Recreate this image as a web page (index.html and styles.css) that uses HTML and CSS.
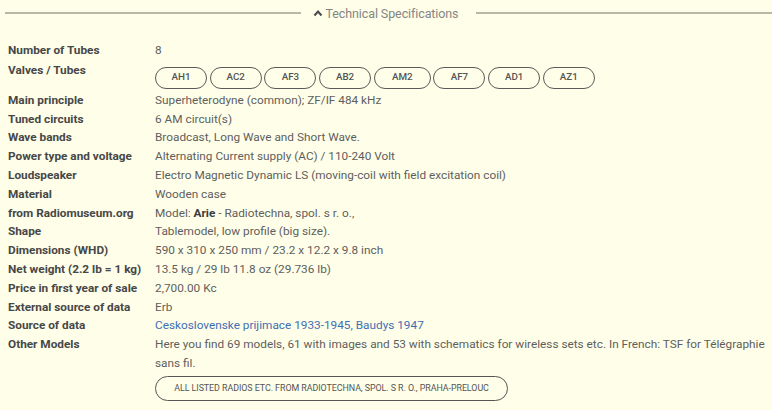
FILE: index.html
```html
<!DOCTYPE html>
<html>
<head>
<meta charset="utf-8">
<link rel="stylesheet" href="styles.css">
</head>
<body>
<div class="heading">
  <span class="rule"></span>
  <span class="title"><svg class="caret" width="10" height="8" viewBox="0 0 10 8"><path d="M1.5 6.5 L5 2.5 L8.5 6.5" fill="none" stroke="#4a4a4a" stroke-width="2"/></svg>Technical Specifications</span>
  <span class="rule"></span>
</div>
<div class="specs">
  <div class="row"><div class="lab">Number of Tubes</div><div class="val">8</div></div>
  <div class="row valves"><div class="lab">Valves / Tubes</div><div class="val"><div class="tubes">
    <span class="tube">AH1</span><span class="tube">AC2</span><span class="tube">AF3</span><span class="tube">AB2</span><span class="tube wide">AM2</span><span class="tube">AF7</span><span class="tube">AD1</span><span class="tube">AZ1</span>
  </div></div></div>
  <div class="row"><div class="lab">Main principle</div><div class="val">Superheterodyne (common); ZF/IF 484 kHz</div></div>
  <div class="row"><div class="lab">Tuned circuits</div><div class="val">6 AM circuit(s)</div></div>
  <div class="row"><div class="lab">Wave bands</div><div class="val">Broadcast, Long Wave and Short Wave.</div></div>
  <div class="row"><div class="lab">Power type and voltage</div><div class="val">Alternating Current supply (AC) / 110-240 Volt</div></div>
  <div class="row"><div class="lab">Loudspeaker</div><div class="val">Electro Magnetic Dynamic LS (moving-coil with field excitation coil)</div></div>
  <div class="row"><div class="lab">Material</div><div class="val">Wooden case</div></div>
  <div class="row"><div class="lab">from Radiomuseum.org</div><div class="val">Model: <b>Arie</b> - Radiotechna, spol. s r. o.,</div></div>
  <div class="row"><div class="lab">Shape</div><div class="val">Tablemodel, low profile (big size).</div></div>
  <div class="row"><div class="lab">Dimensions (WHD)</div><div class="val">590 x 310 x 250 mm / 23.2 x 12.2 x 9.8 inch</div></div>
  <div class="row"><div class="lab">Net weight (2.2 lb = 1 kg)</div><div class="val">13.5 kg / 29 lb 11.8 oz (29.736 lb)</div></div>
  <div class="row"><div class="lab">Price in first year of sale</div><div class="val">2,700.00 Kc</div></div>
  <div class="row"><div class="lab">External source of data</div><div class="val">Erb</div></div>
  <div class="row"><div class="lab">Source of data</div><div class="val"><a class="link" href="#">Ceskoslovenske prijimace 1933-1945, Baudys 1947</a></div></div>
  <div class="row"><div class="lab">Other Models</div><div class="val">Here you find 69 models, 61 with images and 53 with schematics for wireless sets etc. In French: TSF for Télégraphie sans fil.
    <div><span class="allbtn">ALL LISTED RADIOS ETC. FROM RADIOTECHNA, SPOL. S R. O., PRAHA-PRELOUC</span></div>
  </div></div>
</div>
</body>
</html>
```
FILE: styles.css
```css
html, body {
  margin: 0;
  padding: 0;
  background: #fefee9;
  font-family: Roboto, "Liberation Sans", sans-serif;
}
body {
  padding: 3px 0 0 5px;
  width: 767px;
  height: 407px;
  overflow: hidden;
}
.heading {
  display: flex;
  align-items: center;
  gap: 12px;
  height: 20px;
}
.rule {
  flex: 1;
  height: 2px;
  background: #b8b8a6;
}
.title {
  font-size: 12.5px;
  color: #858585;
  display: flex;
  align-items: center;
  gap: 3px;
  letter-spacing: -0.1px;
  padding: 0 6px 0 0;
}
.caret { display: block; }
.specs {
  margin-top: 18px;
  padding-left: 3px;
  font-size: 11.8px;
  line-height: 18.8px;
}
.row {
  display: grid;
  grid-template-columns: 147px 1fr;
}
.lab {
  font-weight: 700;
  color: #474747;
}
.val {
  color: #5e5e5e;
}
.val b { color: #3c3c3c; }
.row:first-child { margin-bottom: 1px; }
.valves { height: 30px; }
.tubes {
  display: flex;
  gap: 2.7px;
  margin-top: 6px;
}
.tube {
  box-sizing: border-box;
  width: 52px;
  height: 22px;
  border: 1.5px solid #5a5a5a;
  border-radius: 11px;
  display: flex;
  align-items: center;
  justify-content: center;
  font-size: 9.8px;
  font-weight: 500;
  color: #555;
}
.tube.wide { width: 57px; }
.link {
  color: #3f6fb3;
  text-decoration: none;
}
.allbtn {
  display: inline-flex;
  align-items: center;
  justify-content: center;
  box-sizing: border-box;
  width: 353px;
  height: 25px;
  margin-top: 3px;
  border: 1.5px solid #555;
  border-radius: 12.5px;
  font-size: 8.9px;
  color: #555;
  letter-spacing: -0.05px;
}
```
